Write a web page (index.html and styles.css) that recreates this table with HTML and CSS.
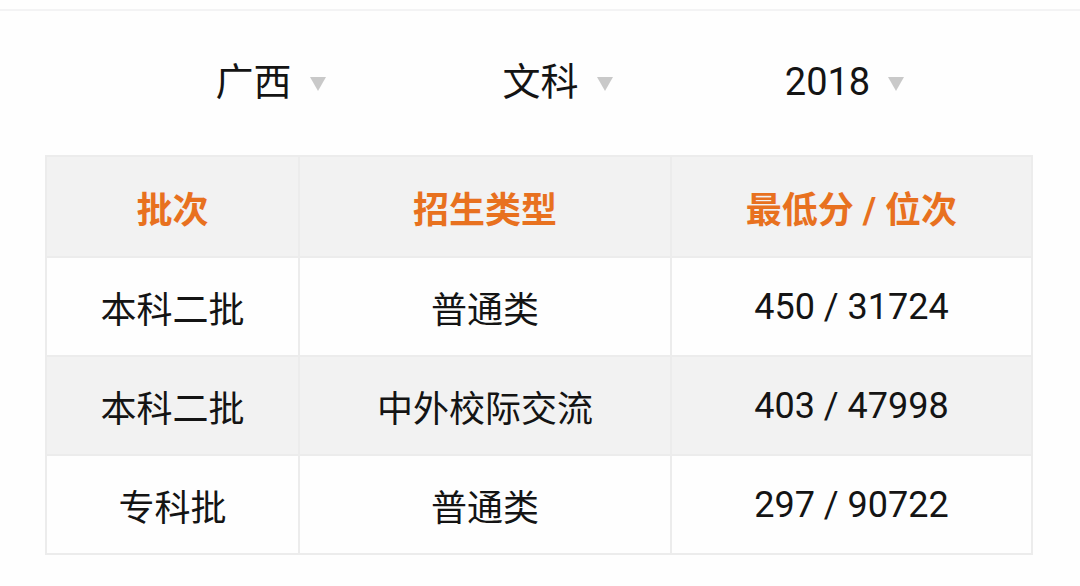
FILE: index.html
```html
<!DOCTYPE html>
<html lang="zh">
<head>
<meta charset="utf-8">
<link rel="stylesheet" href="styles.css">
</head>
<body>
<div class="topline"></div>
<div class="filters">
  <div class="filter"><span class="label">广西</span><span class="arrow"></span></div>
  <div class="filter"><span class="label">文科</span><span class="arrow"></span></div>
  <div class="filter"><span class="label">2018</span><span class="arrow"></span></div>
</div>
<table class="scores">
  <colgroup>
    <col class="c1"><col class="c2"><col class="c3">
  </colgroup>
  <thead>
    <tr class="head"><th>批次</th><th>招生类型</th><th>最低分 / 位次</th></tr>
  </thead>
  <tbody>
    <tr><td>本科二批</td><td>普通类</td><td>450 / 31724</td></tr>
    <tr class="alt"><td>本科二批</td><td>中外校际交流</td><td>403 / 47998</td></tr>
    <tr><td>专科批</td><td>普通类</td><td>297 / 90722</td></tr>
  </tbody>
</table>
</body>
</html>
```

FILE: styles.css
```css
html, body {
  margin: 0;
  padding: 0;
  background: #fefefe;
  font-family: Roboto, "Noto Sans CJK SC", sans-serif;
  color: #141414;
}

.topline {
  margin-top: 9px;
  height: 2px;
  background: #f3f3f4;
}

.filters {
  display: flex;
  margin-top: 21px;
  height: 100px;
  padding-left: 127px;
}

.filter {
  width: 287px;
  display: flex;
  align-items: center;
  justify-content: center;
}

.label {
  font-size: 38px;
  line-height: 1;
}

.arrow {
  width: 0;
  height: 0;
  margin-left: 18px;
  margin-top: 4px;
  border-left: 8px solid transparent;
  border-right: 8px solid transparent;
  border-top: 14px solid #c9c9c9;
}

.scores {
  margin-top: 23px;
  margin-left: 45px;
  width: 986px;
  table-layout: fixed;
  border-collapse: collapse;
  border: 2px solid #ececec;
}

.c1 { width: 253px; }
.c2 { width: 372px; }
.c3 { width: 361px; }

.scores th,
.scores td {
  border: 2px solid #ececec;
  text-align: center;
  padding: 0;
  height: 97px;
  font-size: 36px;
  font-weight: normal;
}

.head th {
  background: #f2f2f2;
  color: #e8711f;
  font-weight: bold;
  height: 99px;
  font-size: 36px;
}

.alt td {
  background: #f2f2f2;
}
```
